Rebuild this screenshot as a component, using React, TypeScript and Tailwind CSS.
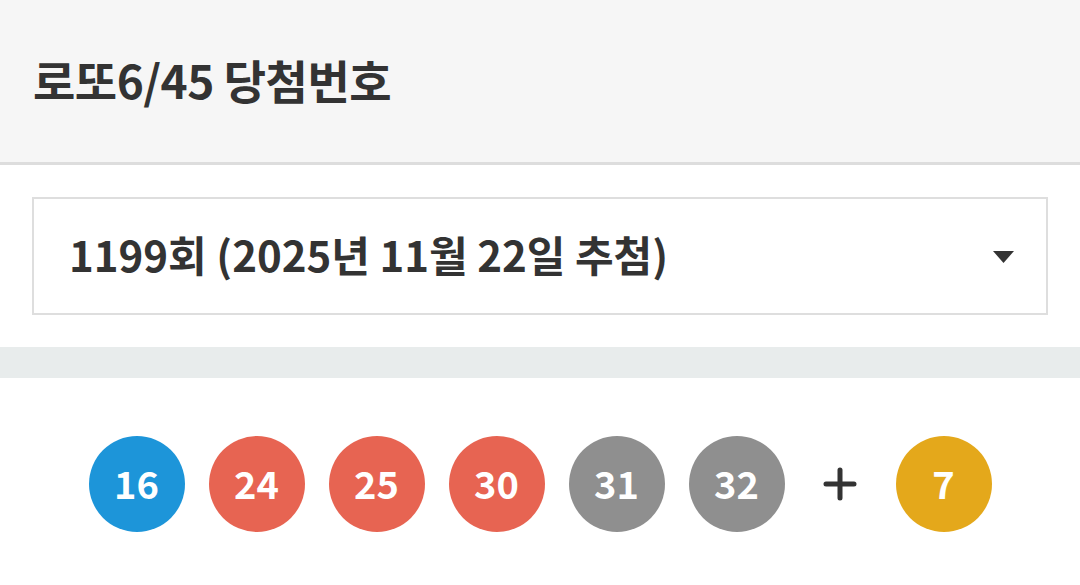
const balls = [
  { n: 16, color: "bg-[#1d95d9]" },
  { n: 24, color: "bg-[#e76452]" },
  { n: 25, color: "bg-[#e76452]" },
  { n: 30, color: "bg-[#e76452]" },
  { n: 31, color: "bg-[#8f8f8f]" },
  { n: 32, color: "bg-[#8f8f8f]" },
];

function Ball({ n, color }: { n: number; color: string }) {
  return (
    <div
      className={`w-[96px] h-[96px] rounded-full ${color} flex items-center justify-center text-white text-[38px] font-bold pb-[3px]`}
    >
      {n}
    </div>
  );
}

export default function App() {
  return (
    <div className="w-[1080px] h-[585px] bg-white font-['Noto_Sans_CJK_KR','Noto_Sans',sans-serif] text-[#333333] overflow-hidden">
      <header className="h-[165px] bg-[#f6f6f6] border-b-[3px] border-[#dddddd] flex items-center px-[33px]">
        <h1 className="text-[46px] font-bold tracking-[-0.5px] pb-[4px]">로또6/45 당첨번호</h1>
      </header>

      <div className="px-[32px] pt-[32px] pb-[32px]">
        <div className="h-[118px] border-2 border-[#dedede] flex items-center justify-between pl-[35px] pr-[32px]">
          <span className="text-[42px] font-bold pb-[6px]">1199회 (2025년 11월 22일 추첨)</span>
          <svg width="21" height="12" viewBox="0 0 21 12" className="mt-[2px]">
            <path d="M0 0 H21 L10.5 12 Z" fill="#333333" />
          </svg>
        </div>
      </div>

      <div className="h-[31px] bg-[#e8ecec]" />

      <div className="flex justify-center items-center gap-[24px] pt-[58px]">
        {balls.map((b) => (
          <Ball key={b.n} n={b.n} color={b.color} />
        ))}
        <div className="w-[63px] flex items-center justify-center">
          <svg width="34" height="34" viewBox="0 0 34 34">
            <path d="M17 3 V31 M3 17 H31" stroke="#333333" strokeWidth="5" strokeLinecap="round" />
          </svg>
        </div>
        <Ball n={7} color="bg-[#e4a81b]" />
      </div>
    </div>
  );
}
